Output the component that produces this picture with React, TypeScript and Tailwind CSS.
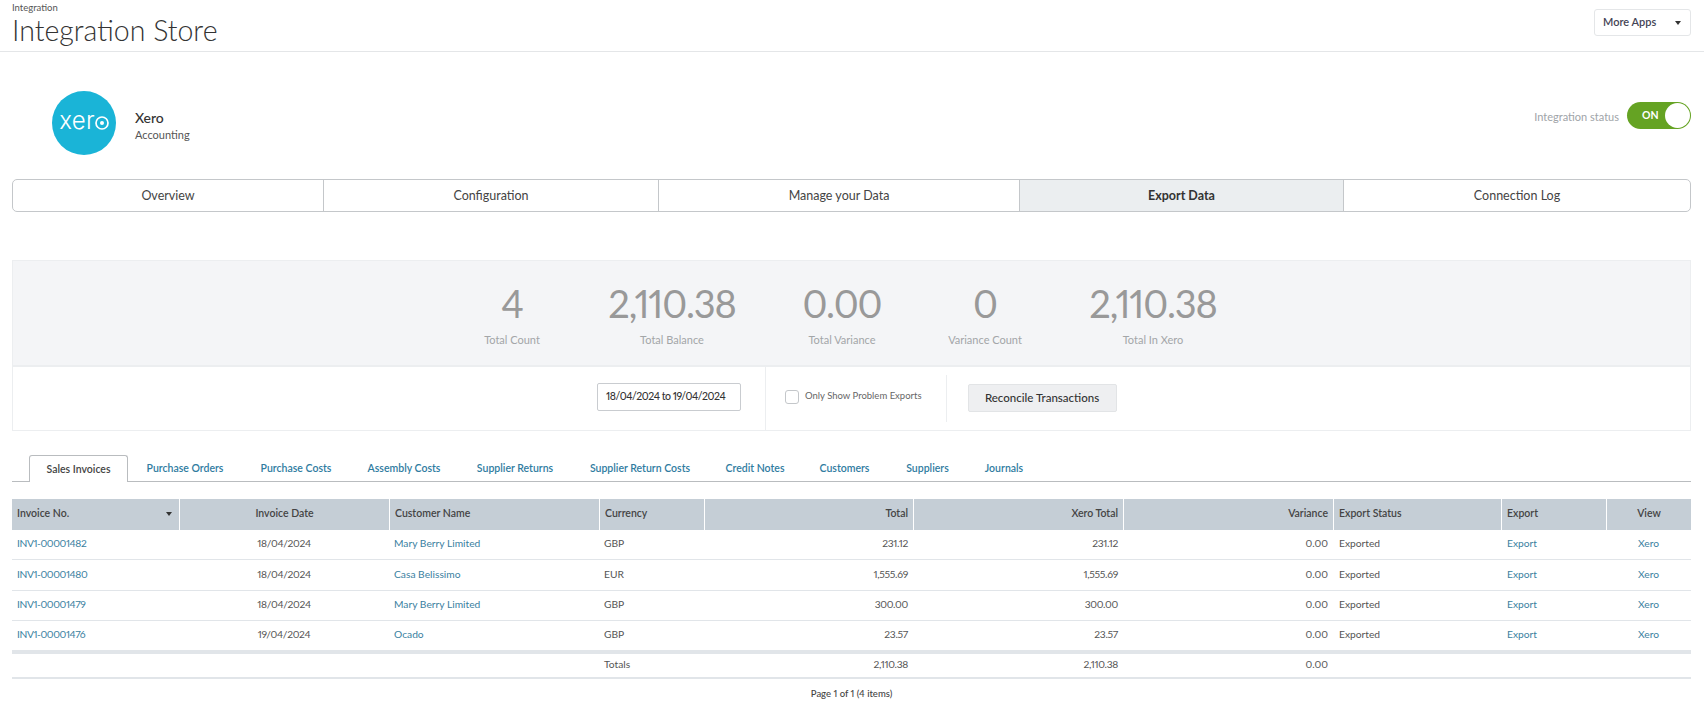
import React from "react";

const navItems = [
  { label: "Overview", cls: "w-[311px] text-[#444]" },
  { label: "Configuration", cls: "w-[335px] text-[#444]" },
  { label: "Manage your Data", cls: "w-[361px] text-[#444]" },
  { label: "Export Data", cls: "w-[324px] bg-[#ebeef0] font-bold text-[#333]" },
  { label: "Connection Log", cls: "flex-1 text-[#444]" },
];

const stats = [
  { value: "4", label: "Total Count", cls: "w-[80px] ml-[459px]" },
  { value: "2,110.38", label: "Total Balance", cls: "w-[128px] ml-[56px]" },
  { value: "0.00", label: "Total Variance", cls: "w-[80px] ml-[66px]" },
  { value: "0", label: "Variance Count", cls: "w-[80px] ml-[63px]" },
  { value: "2,110.38", label: "Total In Xero", cls: "w-[128px] ml-[64px]" },
];

const tabs = [
  { label: "Purchase Orders", cls: "w-[78px] ml-[18px]" },
  { label: "Purchase Costs", cls: "w-[72px] ml-[36px]" },
  { label: "Assembly Costs", cls: "w-[74px] ml-[35px]" },
  { label: "Supplier Returns", cls: "w-[76px] ml-[36px]" },
  { label: "Supplier Return Costs", cls: "w-[100px] ml-[37px]" },
  { label: "Credit Notes", cls: "w-[58px] ml-[36px]" },
  { label: "Customers", cls: "w-[49px] ml-[36px]" },
  { label: "Suppliers", cls: "w-[43px] ml-[37px]" },
  { label: "Journals", cls: "w-[38px] ml-[36px]" },
];

const rows = [
  { inv: "INV1-00001482", date: "18/04/2024", cust: "Mary Berry Limited", cur: "GBP", total: "231.12", h: "h-[30px]" },
  { inv: "INV1-00001480", date: "18/04/2024", cust: "Casa Belissimo", cur: "EUR", total: "1,555.69", h: "h-[31px]" },
  { inv: "INV1-00001479", date: "18/04/2024", cust: "Mary Berry Limited", cur: "GBP", total: "300.00", h: "h-[30px]" },
  { inv: "INV1-00001476", date: "19/04/2024", cust: "Ocado", cur: "GBP", total: "23.57", h: "h-[30px]" },
];

function Caret() {
  return <span className="inline-block w-0 h-0 border-x-[3.5px] border-x-transparent border-t-[4px] border-t-[#333]" />;
}

function XeroLogo() {
  return (
    <div className="w-[64px] h-[64px] rounded-full bg-[#1ab4d7] flex items-center justify-center shrink-0">
      <span className="text-white text-[24px] font-['Inter',sans-serif] font-light leading-none -mt-[4px] tracking-[0.3px]">xer</span>
      <svg width="14" height="14" viewBox="0 0 14 14">
        <circle cx="7" cy="7" r="6" fill="none" stroke="#fff" strokeWidth="1.7" />
        <circle cx="7" cy="7" r="2" fill="#fff" />
      </svg>
    </div>
  );
}

export default function App() {
  const th = "border-l border-white font-semibold text-[10.5px] text-[#444] px-[5px] pb-[1px]";
  const td = "border-b border-[#e1e5e9] text-[10.25px] px-[5px] pb-[1px]";
  const plain = "text-[#555]";
  const link = "text-[#3a7f9f]";
  const num = "tracking-[-0.3px]";
  return (
    <div className="w-full min-h-[702px] bg-white font-['Lato','Liberation_Sans',sans-serif] proportional-nums text-[#333] overflow-hidden">
      <header className="h-[52px] border-b border-[#e4e6e8] px-3 flex justify-between">
        <div>
          <div className="text-[9.5px] leading-[10px] pt-[3px] text-[#555]">Integration</div>
          <h1 className="text-[28.5px] font-light leading-[34px] text-[#333]">Integration Store</h1>
        </div>
        <button className="mt-[9px] mr-[1px] w-[97px] h-[27px] border border-[#e4e6e8] rounded-[3px] flex items-center pl-[8px] text-[11px] font-semibold text-[#445]">
          <span className="flex-1 text-left">More Apps</span>
          <span className="mr-[9px] mb-[-1px] flex"><Caret /></span>
        </button>
      </header>

      <section className="h-[127px] pl-[52px] pr-[13px] pt-[39px] flex items-start justify-between">
        <div className="flex items-center">
          <XeroLogo />
          <div className="ml-[19px] mt-[5px]">
            <div className="text-[14px] font-medium leading-[18px] text-[#333]">Xero</div>
            <div className="text-[11px] leading-[15px] text-[#555]">Accounting</div>
          </div>
        </div>
        <div className="flex items-center mt-[11px]">
          <span className="text-[11px] text-[#a0a4a8] mr-[8px] mt-[3px]">Integration status</span>
          <div className="w-[64px] h-[27px] rounded-full bg-[#65a323] flex items-center justify-between pl-[15px] pr-[1px]">
            <span className="text-[10.5px] font-bold text-white pt-[1px]">ON</span>
            <span className="w-[25px] h-[25px] rounded-full bg-white" />
          </div>
        </div>
      </section>

      <nav className="mx-3 h-[33px] mr-[13px] border border-[#c4c7ca] rounded-[5px] flex overflow-hidden">
        {navItems.map((n, i) => (
          <div
            key={n.label}
            className={`flex items-center justify-center text-[12.5px] pt-[1px] ${i < 4 ? "border-r border-[#c4c7ca]" : ""} ${n.cls}`}
          >
            {n.label}
          </div>
        ))}
      </nav>

      <section className="mx-3 mr-[13px] mt-[48px] h-[171px] border border-[#eceef0]">
        <div className="h-[106px] bg-[#f4f5f7] border-b-2 border-[#eceef0] flex">
          {stats.map((s) => (
            <div key={s.label} className={`flex flex-col items-center shrink-0 ${s.cls}`}>
              <div className="mt-[19px] text-[38px] font-normal leading-[46px] text-[#999999] whitespace-nowrap tracking-[-1.1px]">{s.value}</div>
              <div className="mt-[6px] text-[11px] leading-[16px] text-[#a3a6a8] whitespace-nowrap">{s.label}</div>
            </div>
          ))}
        </div>
        <div className="h-[63px] flex">
          <div className="ml-[584px] w-[144px] h-[28px] mt-[16px] border border-[#c9ccd0] rounded-[2px] flex items-center pl-[8px] text-[10.5px] font-medium text-[#333] tracking-[-0.47px] whitespace-nowrap">
            18/04/2024 to 19/04/2024
          </div>
          <div className="ml-[24px] w-[1px] bg-[#eceef0]" />
          <label className="ml-[19px] mt-[22px] h-[15px] flex items-center">
            <span className="w-[14px] h-[14px] border border-[#c4c7ca] rounded-[3px] bg-white" />
            <span className="ml-[6px] text-[9.5px] text-[#666] whitespace-nowrap">Only Show Problem Exports</span>
          </label>
          <div className="ml-[24px] mt-[8px] w-[1px] h-[47px] bg-[#eceef0]" />
          <button className="ml-[21px] mt-[17px] w-[149px] h-[28px] bg-[#eeeff1] border border-[#e2e4e6] rounded-[2px] text-[11.5px] font-medium text-[#333]">
            Reconcile Transactions
          </button>
        </div>
      </section>

      <div className="mx-3 mr-[13px] mt-[23px] h-[28px] border-b border-[#b9bcbf] flex">
        <div className="ml-[17px] mt-[1px] w-[99px] h-[27px] bg-white border border-b-0 border-[#b9bcbf] rounded-t-[3px] flex items-center justify-center text-[10.5px] font-semibold text-[#444] shrink-0 pt-[2px]">
          Sales Invoices
        </div>
        {tabs.map((t) => (
          <div key={t.label} className={`h-[28px] pt-[2px] flex items-center justify-center text-[10.5px] font-semibold text-[#2f7c9f] whitespace-nowrap shrink-0 ${t.cls}`}>
            {t.label}
          </div>
        ))}
      </div>

      <div className="mx-3 mr-[13px] mt-[17px]">
        <table className="w-full table-fixed border-separate border-spacing-0">
          <colgroup>
            <col className="w-[167px]" />
            <col className="w-[210px]" />
            <col className="w-[210px]" />
            <col className="w-[105px]" />
            <col className="w-[209px]" />
            <col className="w-[210px]" />
            <col className="w-[210px]" />
            <col className="w-[168px]" />
            <col className="w-[105px]" />
            <col />
          </colgroup>
          <thead>
            <tr className="h-[31px] bg-[#c5ced6]">
              <th className={`${th} border-l-0 text-left`}>
                <div className="flex items-center justify-between pr-[2px]">
                  <span>Invoice No.</span>
                  <Caret />
                </div>
              </th>
              <th className={`${th} text-center`}>Invoice Date</th>
              <th className={`${th} text-left`}>Customer Name</th>
              <th className={`${th} text-left`}>Currency</th>
              <th className={`${th} text-right`}>Total</th>
              <th className={`${th} text-right`}>Xero Total</th>
              <th className={`${th} text-right`}>Variance</th>
              <th className={`${th} text-left`}>Export Status</th>
              <th className={`${th} text-left`}>Export</th>
              <th className={`${th} text-center`}>View</th>
            </tr>
          </thead>
          <tbody>
            {rows.map((r) => (
              <tr key={r.inv} className={r.h}>
                <td className={`${td} ${link} tracking-[-0.4px]`}>{r.inv}</td>
                <td className={`${td} ${plain} ${num} text-center`}>{r.date}</td>
                <td className={`${td} ${link}`}>{r.cust}</td>
                <td className={`${td} ${plain}`}>{r.cur}</td>
                <td className={`${td} ${plain} ${num} text-right`}>{r.total}</td>
                <td className={`${td} ${plain} ${num} text-right`}>{r.total}</td>
                <td className={`${td} ${plain} text-right`}>0.00</td>
                <td className={`${td} ${plain} pl-[6px]`}>Exported</td>
                <td className={`${td} ${link} pl-[6px]`}>Export</td>
                <td className={`${td} ${link} text-center`}>Xero</td>
              </tr>
            ))}
          </tbody>
          <tfoot>
            <tr className="h-[28px]">
              {["", "", "", "Totals", "2,110.38", "2,110.38", "0.00", "", "", ""].map((v, i) => (
                <td
                  key={i}
                  className={`border-t-[3px] border-b-2 border-t-[#e1e5e9] border-b-[#e1e5e9] text-[10.25px] text-[#555] px-[5px] pb-[1px] ${i >= 4 && i <= 5 ? "text-right tracking-[-0.3px]" : i === 6 ? "text-right" : ""}`}
                >
                  {v}
                </td>
              ))}
            </tr>
          </tfoot>
        </table>
        <div className="mt-[8px] text-center text-[9.5px] font-medium text-[#444]">Page 1 of 1 (4 items)</div>
      </div>
    </div>
  );
}
